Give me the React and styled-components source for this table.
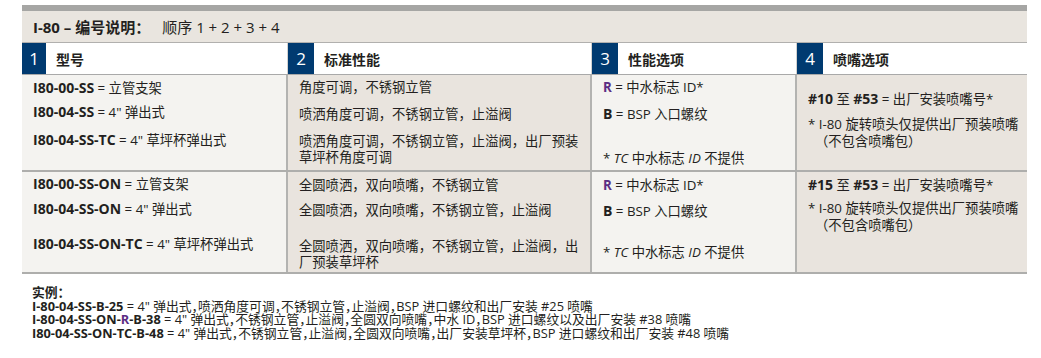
import React from "react";
import styled, { createGlobalStyle } from "styled-components";

const Global = createGlobalStyle`
  html, body { margin: 0; padding: 0; background: #ffffff; }
  body {
    font-family: "Open Sans", "Noto Sans CJK SC", sans-serif;
    color: #231f20;
  }
`;

const Page = styled.div`
  width: 1041px;
  height: 358px;
  box-sizing: border-box;
  padding: 5px 14px 0 22px;
  overflow: hidden;
`;

const TopBar = styled.div`
  height: 6px;
  background: #a6a6a4;
`;

const TitleRow = styled.div`
  height: 32px;
  box-sizing: border-box;
  background: #e9e5df;
  border-bottom: 1px solid #b1b0ae;
  display: flex;
  align-items: center;
  gap: 12px;
  padding-left: 11px;
  font-size: 15px;
`;

const TitleStrong = styled.span`
  font-weight: 700;
`;

const Grid = styled.div`
  display: grid;
  grid-template-columns: 266px 304px 205px 230px;
`;

const HeaderRow = styled(Grid)`
  height: 32px;
  box-sizing: border-box;
  border-bottom: 1px solid #a9a9a9;
  background: #ffffff;
`;

const HeadCell = styled.div`
  display: flex;
  align-items: stretch;
  border-right: 1px solid #d2d2d0;
  &:last-child { border-right: 0; }
`;

const NumBox = styled.div`
  width: ${(p) => p.$w || 26}px;
  background: #003a70;
  color: #ffffff;
  display: flex;
  align-items: center;
  justify-content: center;
  font-size: 17px;
`;

const HeadLabel = styled.div`
  display: flex;
  align-items: center;
  padding-left: 10px;
  font-size: 14px;
  font-weight: 700;
`;

const Group = styled(Grid)`
  height: ${(p) => p.$h}px;
  box-sizing: border-box;
  border-bottom: 2px solid #aeaeac;
`;

const Cell = styled.div`
  background: ${(p) => (p.$shade ? "#e9e4de" : "#f4f3f0")};
  border-right: 2px solid #b3b3b1;
  padding: ${(p) => p.$pt}px 6px 0 11px;
  font-size: 13.3px;
  line-height: 16px;
  &:last-child { border-right: 0; }
`;

const Line = styled.div`
  margin-top: ${(p) => p.$mt || 0}px;
  white-space: nowrap;
`;

const Note = styled.div`
  margin-top: ${(p) => p.$mt || 0}px;
  padding-left: 7px;
  text-indent: -7px;
  line-height: 17px;
  white-space: nowrap;
`;

const Code = styled.b`
  font-weight: 700;
  font-size: 14px;
`;

const Opt = styled.b`
  font-weight: 700;
  color: #5c2d83;
`;

const Em = styled.i`
  font-style: italic;
`;

const Examples = styled.div`
  padding: 12px 0 0 10px;
  font-size: 12.8px;
  line-height: 13.5px;
  font-feature-settings: "halt";
  white-space: nowrap;
`;

const ExTitle = styled.div`
  font-weight: 700;
`;

const ExLine = styled.div``;

const ExCode = styled.b`
  font-weight: 700;
`;

function Row1() {
  return (
    <Group $h={97}>
      <Cell $pt={5}>
        <Line><Code>I80-00-SS</Code> = 立管支架</Line>
        <Line $mt={8}><Code>I80-04-SS</Code> = 4" 弹出式</Line>
        <Line $mt={12}><Code>I80-04-SS-TC</Code> = 4" 草坪杯弹出式</Line>
      </Cell>
      <Cell $shade $pt={4}>
        <Line>角度可调，不锈钢立管</Line>
        <Line $mt={11}>喷洒角度可调，不锈钢立管，止溢阀</Line>
        <Line $mt={11}>喷洒角度可调，不锈钢立管，止溢阀，出厂预装<br />草坪杯角度可调</Line>
      </Cell>
      <Cell $pt={4}>
        <Line><Opt>R</Opt> = 中水标志 ID*</Line>
        <Line $mt={11}><Code>B</Code> = BSP 入口螺纹</Line>
        <Line $mt={28}>* <Em>TC</Em> 中水标志 <Em>ID</Em> 不提供</Line>
      </Cell>
      <Cell $shade $pt={16}>
        <Line><Code>#10</Code> 至 <Code>#53</Code> = 出厂安装喷嘴号*</Line>
        <Note $mt={9}>* I-80 旋转喷头仅提供出厂预装喷嘴<br />（不包含喷嘴包）</Note>
      </Cell>
    </Group>
  );
}

function Row2() {
  return (
    <Group $h={102}>
      <Cell $pt={4}>
        <Line><Code>I80-00-SS-ON</Code> = 立管支架</Line>
        <Line $mt={9}><Code>I80-04-SS-ON</Code> = 4" 弹出式</Line>
        <Line $mt={19}><Code>I80-04-SS-ON-TC</Code> = 4" 草坪杯弹出式</Line>
      </Cell>
      <Cell $shade $pt={5}>
        <Line>全圆喷洒，双向喷嘴，不锈钢立管</Line>
        <Line $mt={9}>全圆喷洒，双向喷嘴，不锈钢立管，止溢阀</Line>
        <Line $mt={20}>全圆喷洒，双向喷嘴，不锈钢立管，止溢阀，出<br />厂预装草坪杯</Line>
      </Cell>
      <Cell $pt={5}>
        <Line><Opt>R</Opt> = 中水标志 ID*</Line>
        <Line $mt={10}><Code>B</Code> = BSP 入口螺纹</Line>
        <Line $mt={25}>* <Em>TC</Em> 中水标志 <Em>ID</Em> 不提供</Line>
      </Cell>
      <Cell $shade $pt={5}>
        <Line><Code>#15</Code> 至 <Code>#53</Code> = 出厂安装喷嘴号*</Line>
        <Note $mt={7}>* I-80 旋转喷头仅提供出厂预装喷嘴<br />（不包含喷嘴包）</Note>
      </Cell>
    </Group>
  );
}

export default function App() {
  return (
    <>
      <Global />
      <Page>
        <TopBar />
        <TitleRow>
          <TitleStrong>I-80 – 编号说明：</TitleStrong>
          <span>顺序 1 + 2 + 3 + 4</span>
        </TitleRow>
        <HeaderRow>
          <HeadCell><NumBox $w={24}>1</NumBox><HeadLabel>型号</HeadLabel></HeadCell>
          <HeadCell><NumBox>2</NumBox><HeadLabel>标准性能</HeadLabel></HeadCell>
          <HeadCell><NumBox>3</NumBox><HeadLabel>性能选项</HeadLabel></HeadCell>
          <HeadCell><NumBox>4</NumBox><HeadLabel>喷嘴选项</HeadLabel></HeadCell>
        </HeaderRow>
        <Row1 />
        <Row2 />
        <Examples>
          <ExTitle>实例：</ExTitle>
          <ExLine><ExCode>I-80-04-SS-B-25</ExCode> = 4" 弹出式，喷洒角度可调，不锈钢立管，止溢阀，BSP 进口螺纹和出厂安装 #25 喷嘴</ExLine>
          <ExLine><ExCode>I-80-04-SS-ON-</ExCode><Opt>R</Opt><ExCode>-B-38</ExCode> = 4" 弹出式，不锈钢立管，止溢阀，全圆双向喷嘴，中水 ID，BSP 进口螺纹以及出厂安装 #38 喷嘴</ExLine>
          <ExLine><ExCode>I80-04-SS-ON-TC-B-48</ExCode> = 4" 弹出式，不锈钢立管，止溢阀，全圆双向喷嘴，出厂安装草坪杯，BSP 进口螺纹和出厂安装 #48 喷嘴</ExLine>
        </Examples>
      </Page>
    </>
  );
}
